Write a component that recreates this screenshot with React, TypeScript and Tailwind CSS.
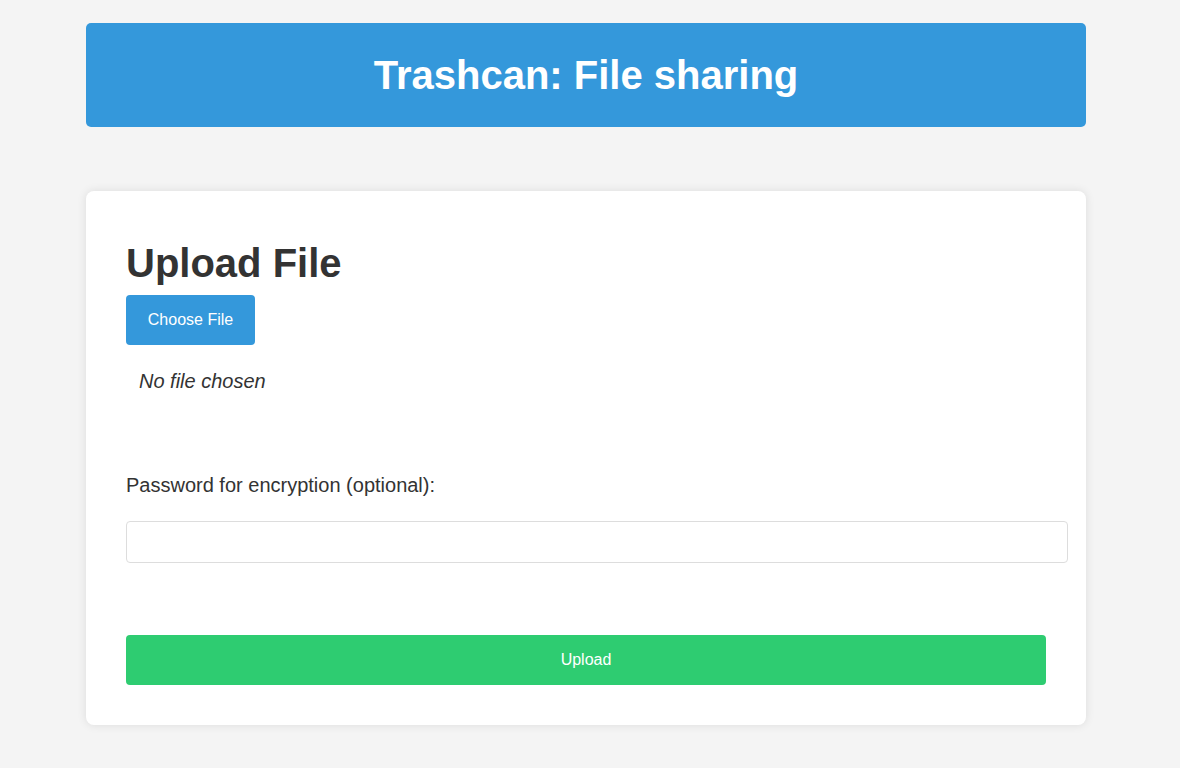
import { useState } from 'react';

export default function App() {
  const [fileName, setFileName] = useState<string | null>(null);
  const [password, setPassword] = useState('');

  return (
    <div className="min-h-[768px] bg-[#f4f4f4] font-['Liberation_Sans',Arial,sans-serif] text-[#333]">
      <div className="ml-[86px] w-[1000px] pt-[23px] pb-[40px]">
        <header className="flex h-[104px] items-center justify-center rounded-[5px] bg-[#3498db]">
          <h1 className="text-[40px] font-bold leading-none text-white">Trashcan: File sharing</h1>
        </header>

        <main className="mt-[64px] rounded-[8px] bg-white p-[40px] shadow-[0_0_10px_rgba(0,0,0,0.1)]">
          <h2 className="mt-[9px] text-[40px] font-bold leading-[46px] text-[#333]">Upload File</h2>

          <label className="mt-[9px] flex h-[50px] w-[129px] cursor-pointer items-center justify-center rounded-[4px] bg-[#3498db] text-[16px] text-white">
            Choose File
            <input
              type="file"
              className="hidden"
              onChange={(e) => setFileName(e.target.files?.[0]?.name ?? null)}
            />
          </label>
          <p className="mt-[25px] ml-[13px] text-[20px] italic leading-[23px] text-[#333]">
            {fileName ?? 'No file chosen'}
          </p>

          <label className="mt-[81px] block text-[20px] leading-[23px] text-[#333]">
            Password for encryption (optional):
          </label>
          <input
            type="password"
            value={password}
            onChange={(e) => setPassword(e.target.value)}
            className="mt-[24px] block h-[42px] w-[942px] rounded-[4px] border border-[#ddd] px-[10px] text-[16px] outline-none"
          />

          <button className="mt-[72px] flex h-[50px] w-full items-center justify-center rounded-[4px] bg-[#2ecc71] text-[16px] text-white">
            Upload
          </button>
        </main>
      </div>
    </div>
  );
}
